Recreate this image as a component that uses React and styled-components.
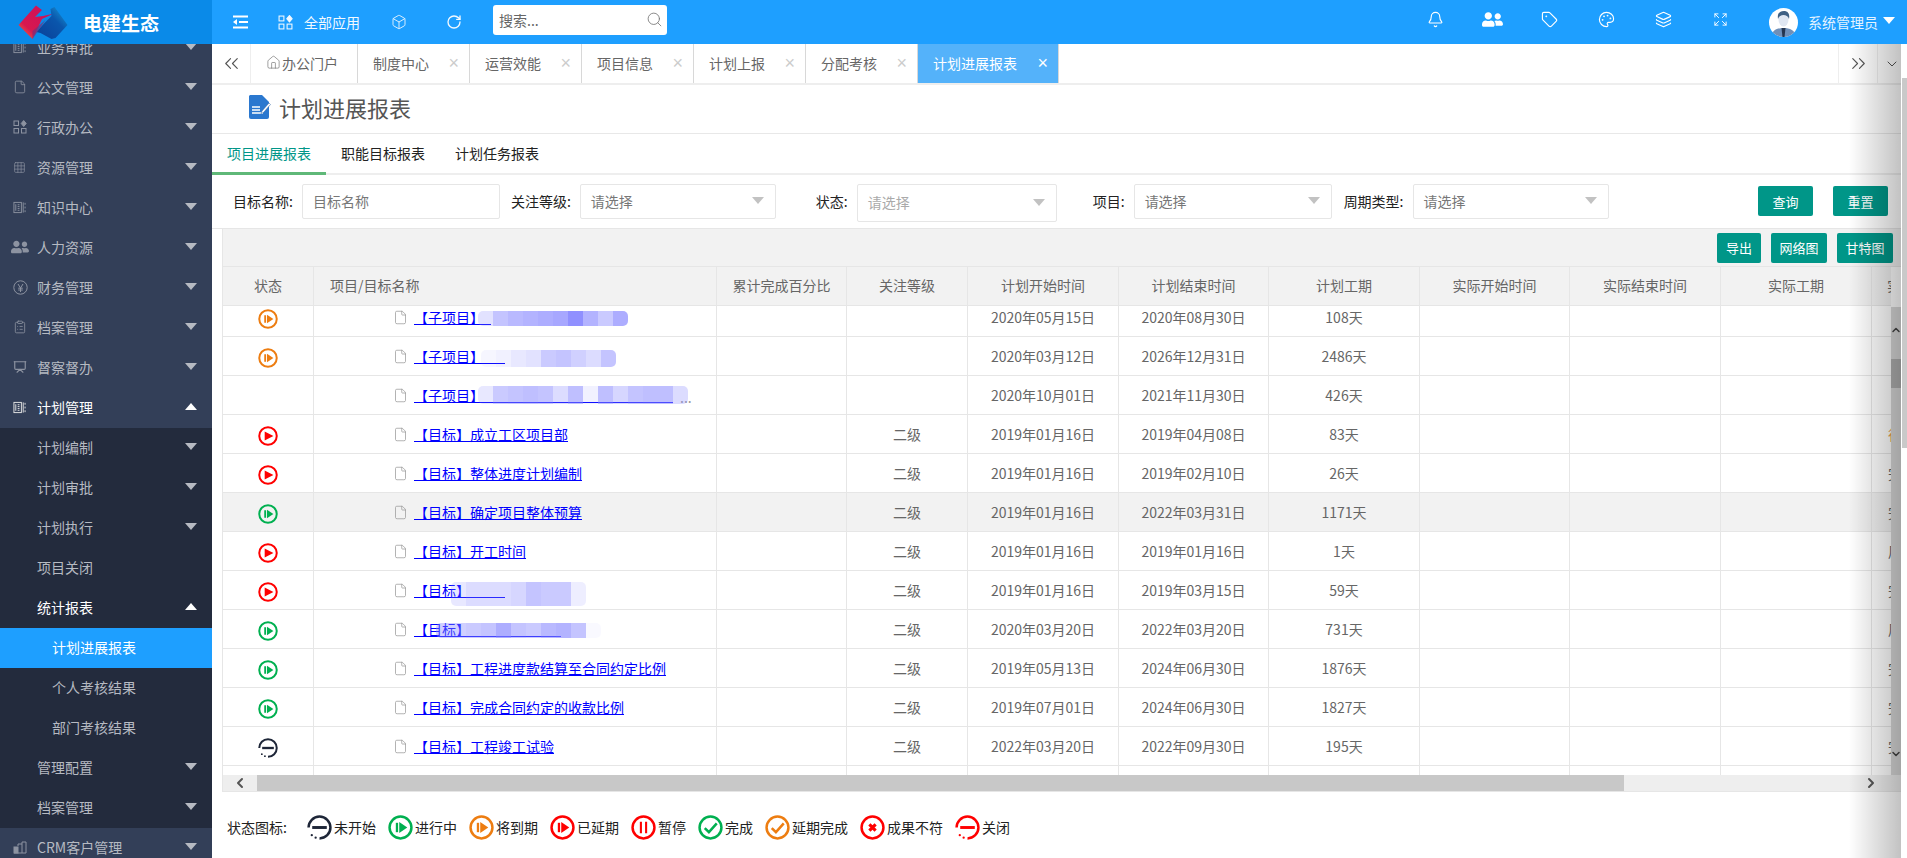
import React from "react";
import styled, { createGlobalStyle } from "styled-components";
import {
  Bell,
  Box,
  ChevronDown,
  ChevronLeft,
  ChevronRight,
  ChevronsLeft,
  ChevronsRight,
  ClipboardList,
  Expand,
  File,
  Grid3x3,
  Home,
  Layers,
  Palette,
  Presentation,
  RotateCw,
  Search,
  Tag,
} from "lucide-react";
import { FaUserFriends } from "react-icons/fa";

const GlobalStyle = createGlobalStyle`
  html, body {
    margin: 0;
    height: 100%;
    overflow: hidden;
    background: #fff;
  }
  body, input, button {
    font-family: "Noto Sans CJK SC", "Liberation Sans", sans-serif;
    font-size: 14px;
  }
  * {
    box-sizing: border-box;
  }
`;

const Page = styled.div`
  width: 1907px;
  height: 858px;
  display: flex;
  flex-direction: column;
  overflow: hidden;
`;

/* top bar */
const TopBar = styled.header`
  height: 44px;
  flex: none;
  display: flex;
  align-items: center;
  background: #1e9fff;
  color: #fff;
`;

const Brand = styled.div`
  width: 212px;
  height: 44px;
  flex: none;
  display: flex;
  align-items: center;
  padding-left: 14px;
  gap: 14px;
  background: #0a8ae8;
  font-size: 19px;
  font-weight: 700;
`;

const TopTool = styled.div`
  display: flex;
  align-items: center;
  gap: 11px;
  margin-left: ${(p) => p.$left}px;
  color: #f2f9ff;
  font-size: 14px;
`;

const SearchBox = styled.div`
  width: 174px;
  height: 30px;
  margin: 0 0 5px 31px;
  padding: 0 4px 0 6px;
  display: flex;
  align-items: center;
  justify-content: space-between;
  background: #fff;
  border-radius: 3px;
  color: #666;
  font-size: 14px;
`;

const TopRight = styled.div`
  margin-left: auto;
  display: flex;
  align-items: center;
  padding-right: 12px;
`;

const TopIcon = styled.div`
  width: 57px;
  height: 44px;
  display: flex;
  align-items: center;
  justify-content: center;
  padding-bottom: 6px;
  color: #fff;
`;

const AvatarWrap = styled.div`
  display: flex;
  margin-left: 20px;
`;

const UserName = styled.span`
  margin-left: 10px;
  color: #e4f3ff;
`;

const WhiteCaret = styled.i`
  width: 0;
  height: 0;
  margin-left: 5px;
  margin-bottom: 4px;
  border-left: 6px solid transparent;
  border-right: 6px solid transparent;
  border-top: 7px solid #fff;
`;

/* sidebar */
const Body = styled.div`
  flex: 1;
  min-height: 0;
  display: flex;
`;

const Sidebar = styled.aside`
  width: 212px;
  flex: none;
  overflow: hidden;
  background: #333f58;
`;

const Menu = styled.div`
  margin-top: -16px;
`;

const MenuItem = styled.div`
  height: 40px;
  display: flex;
  align-items: center;
  padding: 0 15px 2px ${(p) => p.$indent}px;
  color: ${(p) => (p.$open ? "#fff" : "#b6bac2")};
  background: ${(p) => (p.$active ? "#1e9fff" : "transparent")};
  font-size: 14px;
  ${(p) => p.$active && "color: #fff;"}
`;

const MenuIcon = styled.span`
  width: 24px;
  flex: none;
  display: flex;
  color: ${(p) => (p.$open ? "#e8e8e8" : "#8d93a1")};
`;

const MenuLabel = styled.span`
  flex: 1;
`;

const Caret = styled.i`
  width: 0;
  height: 0;
  border-left: 6px solid transparent;
  border-right: 6px solid transparent;
  ${(p) => (p.$up ? "border-bottom: 7px solid #fff;" : "border-top: 7px solid #b6bac2;")}
  margin-bottom: 2px;
`;

const SubMenu = styled.div`
  background: #232b3d;
`;

/* main */
const Main = styled.main`
  position: relative;
  flex: 1;
  min-width: 0;
  padding-right: 6px;
  display: flex;
  flex-direction: column;
  background: #fff;
`;

const EdgeShade = styled.div`
  position: absolute;
  top: 0;
  bottom: 0;
  right: 6px;
  width: 52px;
  z-index: 3;
  pointer-events: none;
  background: linear-gradient(to right, rgba(0, 0, 0, 0), rgba(0, 0, 0, 0.24));
`;

const PageThumb = styled.div`
  position: absolute;
  top: 34px;
  right: 0;
  width: 5px;
  height: 370px;
  z-index: 4;
  background: #c9c9c9;
`;

const TabStrip = styled.nav`
  height: 41px;
  flex: none;
  display: flex;
  border-bottom: 2px solid #eeeeee;
`;

const ArrowCell = styled.div`
  width: ${(p) => p.$w}px;
  flex: none;
  display: flex;
  align-items: center;
  justify-content: ${(p) => (p.$last ? "flex-end" : "center")};
  color: #555;
  border-right: 1px solid ${(p) => (p.$last ? "transparent" : "#eeeeee")};
  ${(p) => p.$start && "margin-left: auto; border-left: 1px solid #eeeeee;"}
`;

const TabItem = styled.div`
  width: ${(p) => p.$w}px;
  flex: none;
  display: flex;
  align-items: center;
  padding: 0 10px 2px 15px;
  justify-content: space-between;
  color: ${(p) => (p.$active ? "#fff" : "#666")};
  background: ${(p) => (p.$active ? "#54b2fa" : "#fff")};
  border-right: 1px solid #d8d8d8;
`;

const TabHome = styled(TabItem)`
  justify-content: flex-start;
  gap: 1px;
`;

const TabClose = styled.span`
  font-size: 18px;
  line-height: 18px;
  font-weight: 300;
  font-family: "Liberation Sans", sans-serif;
  color: ${(p) => (p.$active ? "#fff" : "#cccccc")};
`;

const TitleBar = styled.div`
  height: 49px;
  flex: none;
  display: flex;
  align-items: center;
  gap: 8px;
  padding: 0 0 5px 36px;
  border-bottom: 1px solid #e8e8e8;
  color: #555;
  font-size: 22px;
`;

const SubTabs = styled.div`
  height: 41px;
  flex: none;
  display: flex;
  border-bottom: 2px solid #eeeeee;
`;

const SubTab = styled.div`
  height: 41px;
  padding: 0 15px 4px;
  display: flex;
  align-items: center;
  color: ${(p) => (p.$active ? "#009688" : "#222")};
  ${(p) => p.$active && "border-bottom: 3px solid #5fb878; padding-bottom: 1px;"}
`;

const FilterRow = styled.div`
  height: 54px;
  flex: none;
  display: flex;
  align-items: flex-start;
  padding: 9px 13px 0 21px;
  border-bottom: 1px solid #e6e6e6;
`;

const Field = styled.div`
  display: flex;
  align-items: flex-start;
  margin-left: ${(p) => p.$gap}px;
`;

const FieldLabel = styled.label`
  height: 35px;
  line-height: 34px;
  margin-right: 9px;
  color: #222;
`;

const Control = styled.div`
  width: ${(p) => p.$w}px;
  height: ${(p) => (p.$tall ? 38 : 35)}px;
  display: flex;
  align-items: center;
  justify-content: space-between;
  padding: 0 10px 2px;
  border: 1px solid #e6e6e6;
  border-radius: 2px;
  color: ${(p) => (p.$tall ? "#aaa" : "#777")};
  background: #fff;
`;

const SelectCaret = styled.i`
  width: 0;
  height: 0;
  margin-right: 1px;
  border-left: 6px solid transparent;
  border-right: 6px solid transparent;
  border-top: 7px solid #c2c2c2;
`;

const TealButton = styled.button`
  height: 30px;
  width: ${(p) => p.$w}px;
  flex: none;
  padding: 0;
  border: 0;
  border-radius: 2px;
  background: #009688;
  color: #fff;
  font-size: 13px;
  margin-left: ${(p) => p.$left}px;
`;

const SearchButton = styled(TealButton)`
  margin-top: 2px;
  ${(p) => p.$push && "margin-left: auto;"}
`;

const Grid = styled.section`
  margin-left: 10px;
  flex: none;
  position: relative;
  border-left: 1px solid #e6e6e6;
`;

const GridToolbar = styled.div`
  height: 38px;
  display: flex;
  align-items: center;
  justify-content: flex-end;
  padding-right: 8px;
  background: #f2f2f2;
  border-bottom: 1px solid #e6e6e6;
`;

const DataTable = styled.table`
  width: 1806px;
  table-layout: fixed;
  border-collapse: separate;
  border-spacing: 0;
  color: #666;
`;

const HeadWrap = styled.div`
  height: 39px;
  overflow: hidden;
  margin-right: 10px;
  background: #f2f2f2;
`;

const BodyWrap = styled.div`
  height: 469px;
  overflow: hidden;
  margin-right: 10px;
`;

const BodyTable = styled(DataTable)`
  margin-top: -8px;
`;

const HeadCell = styled.th`
  height: 39px;
  padding: 0 0 2px ${(p) => (p.$left ? 16 : 0)}px;
  font-weight: 400;
  text-align: ${(p) => (p.$left ? "left" : "center")};
  white-space: nowrap;
  overflow: hidden;
  border-right: 1px solid #e6e6e6;
  border-bottom: 1px solid #e6e6e6;
  background: #f2f2f2;
`;

const Row = styled.tr`
  background: ${(p) => (p.$hover ? "#f2f2f2" : "#fff")};
`;

const Cell = styled.td`
  height: 39px;
  padding: 0 0 1px;
  text-align: center;
  white-space: nowrap;
  overflow: hidden;
  border-right: 1px solid #e6e6e6;
  border-bottom: 1px solid #e6e6e6;
`;

const StatusCell = styled(Cell)`
  padding: 3px 0 0;
  line-height: 0;
`;

const EdgeCell = styled(Cell)`
  text-align: left;
  padding-left: 16px;
  color: ${(p) => p.$color || "#666"};
`;

const NameCell = styled(Cell)`
  text-align: left;
  padding: 0 0 0 79px;
`;

const NameWrap = styled.div`
  position: relative;
  display: flex;
  align-items: center;
  gap: 6px;
  color: #999;
`;

const NameLink = styled.a`
  color: #0000ff;
  text-decoration: underline;
  margin-bottom: 1px;
`;

const Dots = styled.span`
  position: absolute;
  left: 287px;
  top: 2px;
  color: #999;
`;

const Mosaic = styled.div`
  position: absolute;
  left: ${(p) => p.$left}px;
  top: ${(p) => p.$top}px;
  display: flex;
  flex-wrap: nowrap;
  filter: blur(0.4px);
  border-radius: 5px;
  overflow: hidden;
`;

const MosaicTile = styled.span`
  width: 15px;
  height: ${(p) => p.$h}px;
  flex: none;
`;

const HScroll = styled.div`
  height: 17px;
  display: flex;
  align-items: center;
  justify-content: space-between;
  background: #eeeeee;
  border-bottom: 1px solid #e6e6e6;
  padding-right: 22px;
  color: #555;
`;

const HArrow = styled.div`
  width: 34px;
  display: flex;
  justify-content: center;
`;

const HThumb = styled.div`
  width: 1367px;
  height: 16px;
  background: #c8c8c8;
  margin-right: auto;
`;

const VScroll = styled.div`
  position: absolute;
  top: 78px;
  right: 0;
  bottom: 17px;
  width: 10px;
  background: #d8d8d8;
  display: flex;
  flex-direction: column;
  align-items: center;
  justify-content: space-between;
  padding: 17px 0 15px;
  color: #444;
`;

const VThumb = styled.div`
  position: absolute;
  top: 52px;
  left: 0;
  width: 10px;
  height: 29px;
  background: #b0b0b0;
`;

const Legend = styled.div`
  flex: 1;
  display: flex;
  align-items: center;
  padding: 4px 0 0 15px;
  color: #222;
`;

const LegendTitle = styled.span`
  margin-right: 20px;
`;

const LegendItem = styled.span`
  display: flex;
  align-items: center;
  gap: 2px;
  margin-right: 12px;
`;

const BOOK = (
  <svg width="13" height="13" viewBox="0 0 14 14" fill="none" stroke="currentColor" strokeWidth="1">
    <rect x="1" y="1.5" width="8" height="11" />
    <path d="M3 3.5v7M5 4h2M5 6h2M5 8h2M5 10h2M11 1.5v11M13 2v2M13 6v2M13 10v2" />
  </svg>
);

const APPS = (
  <svg width="14" height="14" viewBox="0 0 14 14" fill="none" stroke="currentColor" strokeWidth="1">
    <rect x="1" y="1" width="4.5" height="4.5" />
    <rect x="1" y="8.5" width="4.5" height="4.5" />
    <rect x="8.5" y="8.5" width="4.5" height="4.5" />
    <path d="M10.7 .5l2.5 3-2.5 3-2.5-3z" fill="currentColor" />
  </svg>
);

const YEN = (
  <svg width="15" height="15" viewBox="0 0 15 15" fill="none" stroke="currentColor" strokeWidth="1">
    <circle cx="7.5" cy="7.5" r="6.7" />
    <path d="M5 4l2.5 4L10 4M7.5 8v4M5.2 8.2h4.6M5.2 10h4.6" />
  </svg>
);

const CRM = (
  <svg width="14" height="13" viewBox="0 0 14 13" fill="none" stroke="currentColor" strokeWidth="1">
    <rect x="1" y="6" width="4" height="6" fill="currentColor" />
    <path d="M5 5V3h4v9M9 3V1h4v11H1" />
  </svg>
);

const MENU_TOP = [
  { label: "业务审批", icon: BOOK },
  { label: "公文管理", icon: <File size={14} strokeWidth={1.4} /> },
  { label: "行政办公", icon: APPS },
  { label: "资源管理", icon: <Grid3x3 size={13} strokeWidth={1.2} /> },
  { label: "知识中心", icon: BOOK },
  { label: "人力资源", icon: <FaUserFriends size={18} style={{ marginLeft: -2 }} /> },
  { label: "财务管理", icon: YEN },
  { label: "档案管理", icon: <ClipboardList size={14} strokeWidth={1.4} /> },
  { label: "督察督办", icon: <Presentation size={14} strokeWidth={2} /> },
];

const SUB_ONE = [
  { label: "计划编制", caret: true },
  { label: "计划审批", caret: true },
  { label: "计划执行", caret: true },
  { label: "项目关闭" },
];

const TABS = ["制度中心", "运营效能", "项目信息", "计划上报", "分配考核"];
const COLS = [91, 403, 130, 121, 151, 150, 151, 150, 151, 151, 157];
const HEADS = [
  "状态",
  "项目/目标名称",
  "累计完成百分比",
  "关注等级",
  "计划开始时间",
  "计划结束时间",
  "计划工期",
  "实际开始时间",
  "实际结束时间",
  "实际工期",
  "实际累计完成百分比",
];

const SPACE = "\u3000";
const ROWS = [
  {
    status: "soon", name: "【子项目】" + SPACE.repeat(1), start: "2020年05月15日", end: "2020年08月30日", days: "108天",
    blot: { left: 85, top: 4, h: 15, tiles: [0.25, 0.5, 0.6, 0.65, 0.7, 0.75, 0.95, 0.65, 0.45, 0.7] },
  },
  {
    status: "soon", name: "【子项目】" + SPACE.repeat(2), start: "2020年03月12日", end: "2026年12月31日", days: "2486天",
    blot: { left: 88, top: 4, h: 17, tiles: [0.08, 0.12, 0.2, 0.25, 0.45, 0.5, 0.4, 0.3, 0.5] },
  },
  {
    status: null, name: "【子项目】" + SPACE.repeat(14), start: "2020年10月01日", end: "2021年11月30日", days: "426天", dots: true,
    blot: { left: 85, top: 1, h: 18, tiles: [0.2, 0.45, 0.5, 0.55, 0.5, 0.3, 0.55, 0.12, 0.55, 0.35, 0.5, 0.55, 0.55, 0.3] },
  },
  { status: "late", name: "【目标】成立工区项目部", level: "二级", start: "2019年01月16日", end: "2019年04月08日", days: "83天", edge: "待", color: "#e8a050" },
  { status: "late", name: "【目标】整体进度计划编制", level: "二级", start: "2019年01月16日", end: "2019年02月10日", days: "26天" },
  { status: "run", name: "【目标】确定项目整体预算", level: "二级", start: "2019年01月16日", end: "2022年03月31日", days: "1171天", hover: true },
  { status: "late", name: "【目标】开工时间", level: "二级", start: "2019年01月16日", end: "2019年01月16日", days: "1天", edge: "周" },
  {
    status: "late", name: "【目标】" + SPACE.repeat(3), level: "二级", start: "2019年01月16日", end: "2019年03月15日", days: "59天",
    blot: { left: 58, top: 2, h: 24, tiles: [0.2, 0.3, 0.3, 0.3, 0.35, 0.5, 0.45, 0.45, 0.15] },
  },
  {
    status: "run", name: "【目标】" + SPACE.repeat(7), level: "二级", start: "2020年03月20日", end: "2022年03月20日", days: "731天", edge: "周",
    blot: { left: 43, top: 4, h: 15, tiles: [0.4, 0.4, 0.45, 0.5, 0.7, 0.5, 0.45, 0.6, 0.65, 0.5, 0.05] },
  },
  { status: "run", name: "【目标】工程进度款结算至合同约定比例", level: "二级", start: "2019年05月13日", end: "2024年06月30日", days: "1876天" },
  { status: "run", name: "【目标】完成合同约定的收款比例", level: "二级", start: "2019年07月01日", end: "2024年06月30日", days: "1827天" },
  { status: "todo", name: "【目标】工程竣工试验", level: "二级", start: "2022年03月20日", end: "2022年09月30日", days: "195天" },
  { status: "empty" },
];

const LEGEND = [
  ["todo", "未开始"],
  ["run", "进行中"],
  ["soon", "将到期"],
  ["lateBar", "已延期"],
  ["pause", "暂停"],
  ["done", "完成"],
  ["doneLate", "延期完成"],
  ["fail", "成果不符"],
  ["closed", "关闭"],
];

const STATUS_COLOR = {
  todo: "#1e2638",
  run: "#00b050",
  soon: "#ed7d11",
  late: "#ff0000",
  lateBar: "#ff0000",
  pause: "#ff0000",
  done: "#00b050",
  doneLate: "#ed7d11",
  fail: "#ff0000",
  closed: "#ff0000",
};

function StatusIcon({ kind, size }) {
  const color = STATUS_COLOR[kind];
  const broken = kind === "todo" || kind === "closed";
  return (
    <svg width={size} height={size} viewBox="0 0 24 24" fill="none" stroke={color} strokeWidth="2.4">
      {broken ? (
        <>
          <path d="M1.5 12A10.500 10.500 0 1 1 12 22.500" />
          <circle cx="4.600" cy="19.400" r="1.100" fill={color} stroke="none" />
          <circle cx="8.300" cy="21.800" r="1.100" fill={color} stroke="none" />
          <path d="M5 12h14" strokeWidth="2.800" />
        </>
      ) : (
        <circle cx="12" cy="12" r="10.500" />
      )}
      {(kind === "run" || kind === "soon" || kind === "lateBar") && (
        <>
          <rect x="7.500" y="7.500" width="2.200" height="9" fill={color} stroke="none" />
          <path d="M10.800 6.800L18.500 12l-7.700 5.200z" fill={color} stroke="none" />
        </>
      )}
      {kind === "late" && <path d="M8 6.500L18.500 12 8 17.500z" fill={color} stroke="none" />}
      {kind === "pause" && <path d="M9.500 6.500v11M14.500 6.500v11" strokeWidth="2" />}
      {(kind === "done" || kind === "doneLate") && <path d="M6.500 12.500l4 4 7.500-8.500" strokeWidth="2.400" />}
      {kind === "fail" && <path d="M9 9l6 6M15 9l-6 6" strokeWidth="3" />}
    </svg>
  );
}

function Logo() {
  return (
    <svg width="55" height="40" viewBox="0 0 54 40" style={{ flex: "none" }}>
      <defs>
        <linearGradient id="logoRed" x1="0" y1="1" x2="1" y2="0">
          <stop offset="0" stopColor="#f0803a" />
          <stop offset="0.3" stopColor="#d8184f" />
          <stop offset="1" stopColor="#c90f5c" />
        </linearGradient>
        <linearGradient id="logoBlue" x1="0" y1="1" x2="1" y2="0">
          <stop offset="0" stopColor="#0a3f98" />
          <stop offset="0.6" stopColor="#0a56ac" />
          <stop offset="1" stopColor="#18a0dc" />
        </linearGradient>
      </defs>
      <path d="M4 23L21.500 3.500l6 4.500 -7 7 8 -1 11 -2.500 -12 5.500L18 37z" fill="url(#logoRed)" />
      <path d="M22 30l8 -9 7 -7 -1 -7 4 -2 13 18 -12 13 -4 1 -11 -6z" fill="url(#logoBlue)" />
      <path d="M18 37l9 -13 4 -6 -13 11z" fill="#7a2f78" opacity="0.7" />
    </svg>
  );
}

function Avatar() {
  return (
    <svg width="29" height="29" viewBox="0 0 29 29">
      <clipPath id="avatarClip">
        <circle cx="14.500" cy="14.500" r="14.500" />
      </clipPath>
      <circle cx="14.500" cy="14.500" r="14.500" fill="#fff" />
      <g clipPath="url(#avatarClip)">
        <path d="M2 29c1-7 6-9 12.500-9S26 22 27 29z" fill="#6f8fb8" />
        <path d="M12.500 20h4l-1 9h-2z" fill="#24344e" />
        <ellipse cx="14.500" cy="11.500" rx="5" ry="7" fill="#dfe6f2" />
        <path d="M9 11c-1-6 2-8 6-8s6 3 5 8c-1-3-3-4-5.500-4S10 8 9 11z" fill="#3f6084" />
      </g>
    </svg>
  );
}

function TitleIcon() {
  return (
    <svg width="23" height="26" viewBox="0 0 23 26">
      <path d="M2 1h12l7 7v15a2 2 0 0 1-2 2H3a2 2 0 0 1-2-2V2z" fill="#2b78cf" />
      <path d="M4 13h8M4 16h8M4 19h11" stroke="#fff" strokeWidth="1.300" />
      <path d="M14 17l7-8 1.500 1.500-7 8-2.500 1z" fill="#fff" stroke="#2b5f9e" strokeWidth="0.500" />
    </svg>
  );
}

function OutdentIcon() {
  return (
    <svg width="16" height="14" viewBox="0 0 16 14" fill="none" stroke="#fff" strokeWidth="1.800">
      <path d="M1 1.500h15M7 7h9M1 12.500h15" />
      <path d="M5 4v6L1 7z" fill="#fff" stroke="none" />
    </svg>
  );
}

function MenuRow({ label, icon, caret, up, indent, open, active }) {
  return (
    <MenuItem $indent={indent} $open={open} $active={active}>
      {icon && <MenuIcon $open={open}>{icon}</MenuIcon>}
      <MenuLabel>{label}</MenuLabel>
      {caret && <Caret $up={up} />}
    </MenuItem>
  );
}

function Blot({ left, top, h, tiles }) {
  return (
    <Mosaic $left={left} $top={top}>
      {tiles.map((alpha, i) => (
        <MosaicTile key={i} $h={h} style={{ background: `rgba(138, 138, 255, ${alpha})` }} />
      ))}
    </Mosaic>
  );
}

function ColGroup() {
  return (
    <colgroup>
      {COLS.map((w, i) => (
        <col key={i} width={w} />
      ))}
    </colgroup>
  );
}

export default function App() {
  return (
    <>
      <GlobalStyle />
      <Page>
        <TopBar>
          <Brand>
            <Logo />
            <span>电建生态</span>
          </Brand>
          <TopTool $left={20}>
            <OutdentIcon />
          </TopTool>
          <TopTool $left={30}>
            {React.cloneElement(APPS, { width: 15, height: 15 })}
            全部应用
          </TopTool>
          <TopTool $left={31}>
            <Box size={16} strokeWidth={1.3} />
          </TopTool>
          <TopTool $left={39}>
            <RotateCw size={16} strokeWidth={2} />
          </TopTool>
          <SearchBox>
            搜索...
            <Search size={17} strokeWidth={1.2} color="#777" />
          </SearchBox>
          <TopRight>
            <TopIcon>
              <Bell size={17} strokeWidth={1.6} />
            </TopIcon>
            <TopIcon>
              <FaUserFriends size={21} />
            </TopIcon>
            <TopIcon>
              <Tag size={17} strokeWidth={1.6} />
            </TopIcon>
            <TopIcon>
              <Palette size={17} strokeWidth={1.6} />
            </TopIcon>
            <TopIcon>
              <Layers size={17} strokeWidth={1.6} />
            </TopIcon>
            <TopIcon>
              <Expand size={15} strokeWidth={1.5} />
            </TopIcon>
            <AvatarWrap>
              <Avatar />
            </AvatarWrap>
            <UserName>系统管理员</UserName>
            <WhiteCaret />
          </TopRight>
        </TopBar>

        <Body>
          <Sidebar>
            <Menu>
              {MENU_TOP.map((m) => (
                <MenuRow key={m.label} label={m.label} icon={m.icon} caret indent={13} />
              ))}
              <MenuRow label="计划管理" icon={BOOK} caret up open indent={13} />
              <SubMenu>
                {SUB_ONE.map((m) => (
                  <MenuRow key={m.label} label={m.label} caret={m.caret} indent={37} />
                ))}
                <MenuRow label="统计报表" caret up open indent={37} />
                <MenuRow label="计划进展报表" active indent={52} />
                <MenuRow label="个人考核结果" indent={52} />
                <MenuRow label="部门考核结果" indent={52} />
                <MenuRow label="管理配置" caret indent={37} />
                <MenuRow label="档案管理" caret indent={37} />
              </SubMenu>
              <MenuRow label="CRM客户管理" icon={CRM} caret indent={13} />
            </Menu>
          </Sidebar>

          <Main>
            <EdgeShade />
            <PageThumb />
            <TabStrip>
              <ArrowCell $w={39}>
                <ChevronsLeft size={23} strokeWidth={1.2} />
              </ArrowCell>
              <TabHome $w={107}>
                <Home size={15} strokeWidth={1} />
                办公门户
              </TabHome>
              {TABS.map((t) => (
                <TabItem key={t} $w={112}>
                  {t}
                  <TabClose>×</TabClose>
                </TabItem>
              ))}
              <TabItem $w={141} $active>
                计划进展报表
                <TabClose $active>×</TabClose>
              </TabItem>
              <ArrowCell $w={40} $start>
                <ChevronsRight size={23} strokeWidth={1.2} />
              </ArrowCell>
              <ArrowCell $w={23} $last>
                <ChevronDown size={16} strokeWidth={1.5} />
              </ArrowCell>
            </TabStrip>

            <TitleBar>
              <TitleIcon />
              计划进展报表
            </TitleBar>

            <SubTabs>
              <SubTab $active>项目进展报表</SubTab>
              <SubTab>职能目标报表</SubTab>
              <SubTab>计划任务报表</SubTab>
            </SubTabs>

            <FilterRow>
              <Field $gap={0}>
                <FieldLabel>目标名称:</FieldLabel>
                <Control $w={198}>目标名称</Control>
              </Field>
              <Field $gap={11}>
                <FieldLabel>关注等级:</FieldLabel>
                <Control $w={196}>
                  请选择
                  <SelectCaret />
                </Control>
              </Field>
              <Field $gap={40}>
                <FieldLabel>状态:</FieldLabel>
                <Control $w={200} $tall>
                  请选择
                  <SelectCaret />
                </Control>
              </Field>
              <Field $gap={36}>
                <FieldLabel>项目:</FieldLabel>
                <Control $w={198}>
                  请选择
                  <SelectCaret />
                </Control>
              </Field>
              <Field $gap={12}>
                <FieldLabel>周期类型:</FieldLabel>
                <Control $w={196}>
                  请选择
                  <SelectCaret />
                </Control>
              </Field>
              <SearchButton $w={55} $push>查询</SearchButton>
              <SearchButton $w={55} $left={20}>重置</SearchButton>
            </FilterRow>

            <Grid>
              <GridToolbar>
                <TealButton $w={44} $left={0}>导出</TealButton>
                <TealButton $w={56} $left={10}>网络图</TealButton>
                <TealButton $w={56} $left={10}>甘特图</TealButton>
              </GridToolbar>
              <HeadWrap>
                <DataTable>
                  <ColGroup />
                  <thead>
                    <tr>
                      {HEADS.map((h, i) => (
                        <HeadCell key={h} $left={i === 1}>
                          {h}
                        </HeadCell>
                      ))}
                    </tr>
                  </thead>
                </DataTable>
              </HeadWrap>
              <BodyWrap>
                <BodyTable>
                  <ColGroup />
                  <tbody>
                    {ROWS.map((r, i) => (
                      <Row key={i} $hover={r.hover}>
                        <StatusCell>
                          {r.status && r.status !== "empty" && <StatusIcon kind={r.status} size={20} />}
                        </StatusCell>
                        <NameCell>
                          {r.name && (
                            <NameWrap>
                              <File size={15} strokeWidth={1.2} />
                              <NameLink href="#">{r.name}</NameLink>
                              {r.dots && <Dots>...</Dots>}
                              {r.blot && <Blot {...r.blot} />}
                            </NameWrap>
                          )}
                        </NameCell>
                        <Cell />
                        <Cell>{r.level}</Cell>
                        <Cell>{r.start}</Cell>
                        <Cell>{r.end}</Cell>
                        <Cell>{r.days}</Cell>
                        <Cell />
                        <Cell />
                        <Cell />
                        <EdgeCell $color={r.color}>{r.name && !r.name.includes("子项目") ? r.edge || "完" : ""}</EdgeCell>
                      </Row>
                    ))}
                  </tbody>
                </BodyTable>
              </BodyWrap>
              <HScroll>
                <HArrow>
                  <ChevronLeft size={16} strokeWidth={3} />
                </HArrow>
                <HThumb />
                <ChevronRight size={16} strokeWidth={3} />
              </HScroll>
              <VScroll>
                <ChevronDown size={12} strokeWidth={3} style={{ transform: "rotate(180deg)" }} />
                <VThumb />
                <ChevronDown size={12} strokeWidth={3} />
              </VScroll>
            </Grid>

            <Legend>
              <LegendTitle>状态图标:</LegendTitle>
              {LEGEND.map(([kind, label]) => (
                <LegendItem key={kind}>
                  <StatusIcon kind={kind} size={25} />
                  {label}
                </LegendItem>
              ))}
            </Legend>
          </Main>
        </Body>
      </Page>
    </>
  );
}
